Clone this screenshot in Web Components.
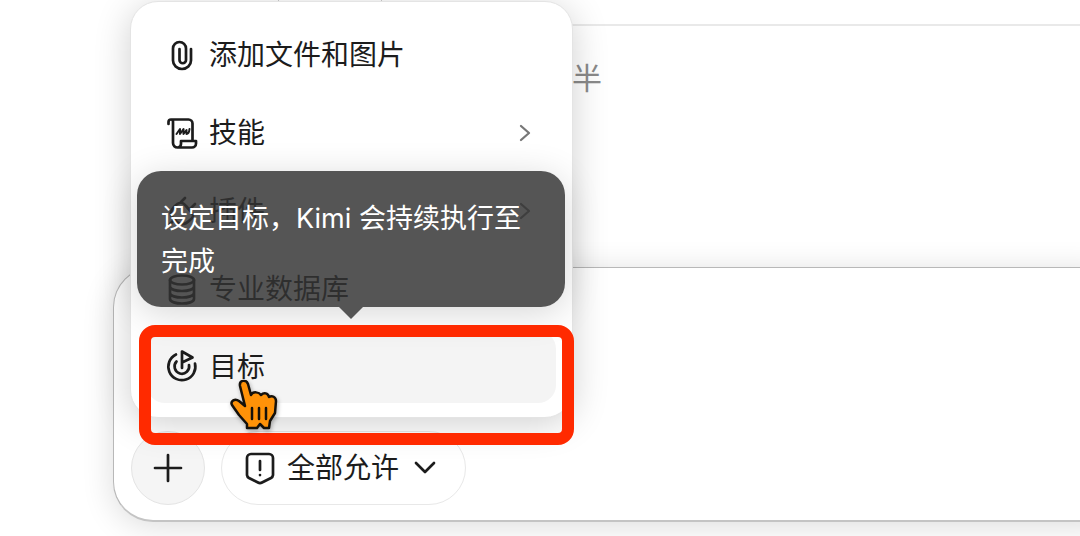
<!DOCTYPE html>
<html lang="zh-CN">
<head>
<meta charset="utf-8">
<title>Kimi</title>
<style>
html{background:#fff}
body{margin:0;overflow:hidden;color:#1c1c1c;font-family:Inter,"Noto Sans CJK SC",sans-serif;font-size:28px}
</style>
</head>
<body>
<chat-page>
  <prompt-preview>半</prompt-preview>
  <chat-composer>
    <action-menu slot="menu">
      <menu-item icon="clip">添加文件和图片</menu-item>
      <menu-item icon="scroll" more>技能</menu-item>
      <menu-item icon="plug" more>插件</menu-item>
      <menu-item icon="database">专业数据库</menu-item>
      <menu-item icon="target" active>目标
        <tool-tip slot="tip">设定目标，Kimi 会持续执行至完成</tool-tip>
      </menu-item>
    </action-menu>
    <focus-frame slot="menu"></focus-frame>
    <hand-pointer slot="menu"></hand-pointer>
    <add-button></add-button>
    <permission-button>全部允许</permission-button>
  </chat-composer>
</chat-page>
<script>
const icons = {
  clip: '<path d="M24 9v11.500a9 8.500 0 0 1-18 0V8.500a6.500 6.500 0 0 1 13 0V20a3.250 3.250 0 0 1-6.500 0V9"/>',
  scroll: '<path d="M1.500 6V4a2.500 2.500 0 0 1 2.500-2.500h17.500a4 4 0 0 1 4 4V22M4 1.500a2 2 0 0 1 2 2V25a4.500 4.500 0 0 0 4.500 4.500M10.500 29.500a3.500 3.500 0 0 0 3.500-3.500v-3h15v2.500a4 4 0 0 1-4 4h-14.500"/><path stroke-width="2" d="M9.500 16l3.500-5v5l3.500-5v5l3-4v4q2.500 0 3-5"/>',
  plug: '<path d="M7 11q7-8 12-1l6 7q3 3-2 7-7 7-13 2l-4-4q-5-5 1-11zM18 2l-4 4M28 8l-5 5M6 25l-4 4"/>',
  database: '<ellipse cx="15" cy="6" rx="12" ry="4.500"/><path d="M3 6v19c0 6 24 6 24 0V6M3 12.500c0 6 24 6 24 0M3 19c0 6 24 6 24 0"/>',
  target: '<path d="M9 2.500A13.500 13.500 0 1 0 28 11.500M9.500 9.500a7.300 7.300 0 1 0 12.500 3.500M15 16V-.5L25.500 5.500 15 10.500"/>'
};
function define(name, render) {
  customElements.define(name, class extends HTMLElement {
    constructor() {
      super();
      this.attachShadow({mode: 'open'}).innerHTML = render(this);
    }
  });
}
const buttonReset = 'button{box-sizing:border-box;font:inherit;color:inherit;margin:0;cursor:pointer}svg{fill:none;stroke:currentColor;stroke-width:2.700;stroke-linecap:round;stroke-linejoin:round;flex:none;overflow:visible}';

define('chat-page', () => `<style>
:host{display:flex;flex-direction:column;overflow:hidden;min-height:100vh;box-sizing:border-box;padding-left:113px}
.tabs{width:102px;height:1px;margin-left:165px;border:solid #ccc;border-width:0 1px}
::slotted(*){margin-right:-48px}
</style><div class="tabs"></div><slot></slot>`);

define('prompt-preview', () => `<style>
:host{display:block;box-sizing:border-box;height:243px;margin:23px 0 0 48px;padding:32px 0 0 411px;border-top:2px solid #e9e9e9;color:#8a8a8a;font-size:30px;line-height:40px}
</style><slot></slot>`);

define('chat-composer', () => `<style>
:host{display:flex;position:relative;box-sizing:border-box;height:255px;padding:15px 17px;align-items:flex-end;gap:16px;border:1px solid #b8b8b8;border-bottom:2px solid #c4c4c4;border-radius:40px;background:#fff;box-shadow:0 4px 32px rgba(0,0,0,.14)}
</style><slot></slot><slot name="menu"></slot>`);

define('action-menu', () => `<style>
:host{display:flex;flex-direction:column;gap:6px;position:absolute;left:16px;bottom:102px;box-sizing:border-box;width:443px;padding:17px 16px 14px;border:1px solid #e4e4e4;border-radius:28px;background:#fff;box-shadow:0 6px 36px rgba(0,0,0,.19)}
</style><slot></slot>`);

define('menu-item', el => `<style>
:host{display:block;position:relative}
${buttonReset}
button{display:flex;align-items:center;gap:12px;width:100%;height:72px;padding:0 23px 0 20px;border:0;border-radius:18px;background:${el.hasAttribute('active') ? '#f4f4f4' : 'none'};text-align:left;line-height:40px}
span{flex:1}
.more{color:#777}
</style><button type="button"><svg width="30" height="31" viewBox="0 0 30 31">${icons[el.getAttribute('icon')]}</svg><span><slot></slot></span>${el.hasAttribute('more') ? '<svg class="more" width="14" height="16" viewBox="0 0 14 16"><path d="M2 1l8 7-8 7" stroke-width="2.300"/></svg>' : ''}</button><slot name="tip"></slot>`);

define('tool-tip', () => `<style>
:host{display:block;position:absolute;left:-10px;bottom:calc(100% + 24px);box-sizing:border-box;width:428px;padding:26px 24px 24px;border-radius:24px;background:rgba(51,51,51,.83);color:#fff;font-size:27px;line-height:43px;box-shadow:0 6px 36px rgba(0,0,0,.16)}
:host::after{content:"";position:absolute;left:50%;top:100%;margin-left:-12px;border:12px solid transparent;border-top-color:#555;border-bottom:0}
</style><slot></slot>`);

define('focus-frame', () => `<style>
:host{display:block;position:absolute;left:25px;bottom:75px;box-sizing:border-box;width:435px;height:120px;border:12px solid #ff2a00;border-radius:16px;pointer-events:none}
</style>`);

define('hand-pointer', () => `<style>
:host{display:block;position:absolute;left:116px;bottom:90px;pointer-events:none}
svg{display:block;filter:drop-shadow(1px 2px 2px rgba(0,0,0,.3))}
</style><svg width="48" height="50" viewBox="0 0 48 50" fill="#ff9208" stroke="#15110b" stroke-width="2.500" stroke-linejoin="round" stroke-linecap="round"><path d="M17 48v-4L9 35 2 25c-2-4 3-7 7-4l6 5L10 6C9 0 16-1 18 4l3 11c2-4 8-3 10 0 3-3 7-2 8 2 3-2 7 0 7 4l-1 12-5 8-1 7h-5l-4-4-3 4z"/><path d="M22 28v11M29 28v11M36 28v11"/></svg>`);

define('add-button', () => `<style>
:host{display:block}
${buttonReset}
button{display:grid;place-items:center;width:74px;height:74px;border:1px solid #e4e4e4;border-radius:50%;background:#f5f5f5;padding:0}
</style><button type="button" aria-label="添加"><svg width="28" height="28" viewBox="0 0 28 28"><path d="M14 1v26M1 14h26"/></svg></button>`);

define('permission-button', () => `<style>
:host{display:block}
${buttonReset}
button{display:flex;align-items:center;gap:12px;height:74px;padding:0 30px 0 23px;border:1px solid #e8e8e8;border-radius:37px;background:#fff;line-height:40px}
.down{margin-left:4px}
</style><button type="button"><svg width="30" height="32" viewBox="0 0 30 32"><path d="M6 2h18a4 4 0 0 1 4 4v17a4 4 0 0 1-2 3l-9 4.500a4 4 0 0 1-4 0l-9-4.500a4 4 0 0 1-2-3V6a4 4 0 0 1 4-4z"/><path d="M15 9v9M15 23v.1"/></svg><slot></slot><svg class="down" width="20" height="14" viewBox="0 0 20 14"><path d="M1 2l9 9 9-9"/></svg></button>`);
</script>
</body>
</html>
